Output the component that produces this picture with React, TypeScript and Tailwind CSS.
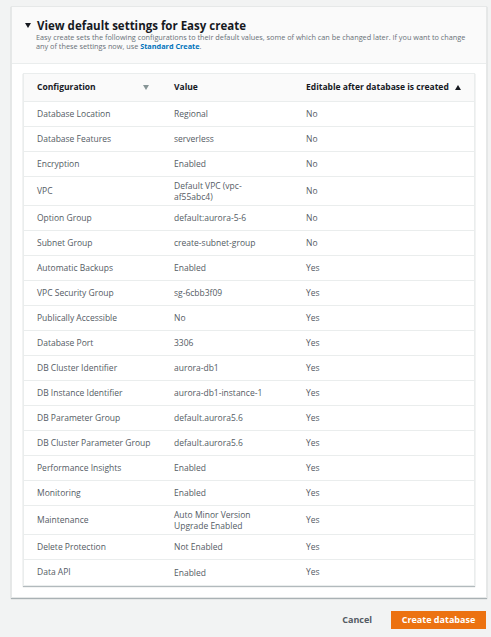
import React from "react";

type Row = { c: string; v: string[]; e: string };

const rows: Row[] = [
  { c: "Database Location", v: ["Regional"], e: "No" },
  { c: "Database Features", v: ["serverless"], e: "No" },
  { c: "Encryption", v: ["Enabled"], e: "No" },
  { c: "VPC", v: ["Default VPC (vpc-", "af55abc4)"], e: "No" },
  { c: "Option Group", v: ["default:aurora-5-6"], e: "No" },
  { c: "Subnet Group", v: ["create-subnet-group"], e: "No" },
  { c: "Automatic Backups", v: ["Enabled"], e: "Yes" },
  { c: "VPC Security Group", v: ["sg-6cbb3f09"], e: "Yes" },
  { c: "Publically Accessible", v: ["No"], e: "Yes" },
  { c: "Database Port", v: ["3306"], e: "Yes" },
  { c: "DB Cluster Identifier", v: ["aurora-db1"], e: "Yes" },
  { c: "DB Instance Identifier", v: ["aurora-db1-instance-1"], e: "Yes" },
  { c: "DB Parameter Group", v: ["default.aurora5.6"], e: "Yes" },
  { c: "DB Cluster Parameter Group", v: ["default.aurora5.6"], e: "Yes" },
  { c: "Performance Insights", v: ["Enabled"], e: "Yes" },
  { c: "Monitoring", v: ["Enabled"], e: "Yes" },
  { c: "Maintenance", v: ["Auto Minor Version", "Upgrade Enabled"], e: "Yes" },
  { c: "Delete Protection", v: ["Not Enabled"], e: "Yes" },
  { c: "Data API", v: ["Enabled"], e: "Yes" },
];

const Tri = ({ up, color }: { up?: boolean; color: string }) => (
  <svg width="6" height="5" viewBox="0 0 6 5" className="shrink-0">
    {up ? (
      <polygon points="0,5 6,5 3,0" fill={color} />
    ) : (
      <polygon points="0,0 6,0 3,5" fill={color} />
    )}
  </svg>
);

export default function App() {
  return (
    <div
      className="w-[491px] h-[637px] bg-[#f2f3f3] pt-[6px] overflow-hidden"
      style={{ fontFamily: '"Open Sans", "Noto Sans", sans-serif' }}
    >
      <div className="ml-[11px] w-[476px] bg-white border border-[#e6e8e8] shadow-[0_1px_1px_rgba(0,28,36,0.3)]">
        <div className="bg-[#fafafa] border-b border-[#eaeded] h-[57px] pt-[11px] pl-[13px] pr-[8px]">
          <div className="flex items-center gap-[6px]">
            <Tri color="#16191f" />
            <span className="text-[11.5px] font-bold text-[#16191f] leading-[15px]">
              View default settings for Easy create
            </span>
          </div>
          <div className="pl-[11px] text-[7.3px] leading-[9px] text-[#687078] whitespace-nowrap">
            Easy create sets the following configurations to their default values, some of which can be changed later. If you want to change
            <br />
            any of these settings now, use{" "}
            <span className="text-[#0073bb] font-bold">Standard Create</span>.
          </div>
        </div>
        <div className="px-[11px] pt-[9px] pb-[11px]">
          <div className="border border-[#eaeded] shadow-[0_1px_1px_rgba(0,28,36,0.3)] bg-white">
            <div className="flex h-[28px] items-center bg-[#fafafa] border-b border-[#eaeded] text-[8.5px] font-bold text-[#16191f]">
              <div className="w-[137px] pl-[13px] pr-[12px] flex items-center justify-between">
                <span>Configuration</span>
                <Tri color="#879596" />
              </div>
              <div className="w-[132px] pl-[13px]">Value</div>
              <div className="flex-1 pl-[13px] pr-[13px] flex items-center justify-between">
                <span>Editable after database is created</span>
                <Tri up color="#16191f" />
              </div>
            </div>
            {rows.map((r, i) => (
              <div
                key={r.c}
                className={`flex items-center text-[8.5px] text-[#545b64] ${
                  r.v.length > 1 ? "h-[29px]" : "h-[25px]"
                } ${i < rows.length - 1 ? "border-b border-[#eaeded]" : ""}`}
              >
                <div className="w-[137px] pl-[13px]">{r.c}</div>
                <div className="w-[132px] pl-[13px] leading-[11.5px]">
                  {r.v.map((l) => (
                    <div key={l}>{l}</div>
                  ))}
                </div>
                <div className="flex-1 pl-[13px]">{r.e}</div>
              </div>
            ))}
          </div>
        </div>
      </div>
      <div className="flex justify-end items-center mt-[13px] mr-[5px] gap-[19px]">
        <span className="text-[9px] font-bold text-[#545b64]">Cancel</span>
        <button className="w-[95px] h-[18px] bg-[#ec7211] text-white text-[9px] font-bold flex items-center justify-center">
          Create database
        </button>
      </div>
    </div>
  );
}
